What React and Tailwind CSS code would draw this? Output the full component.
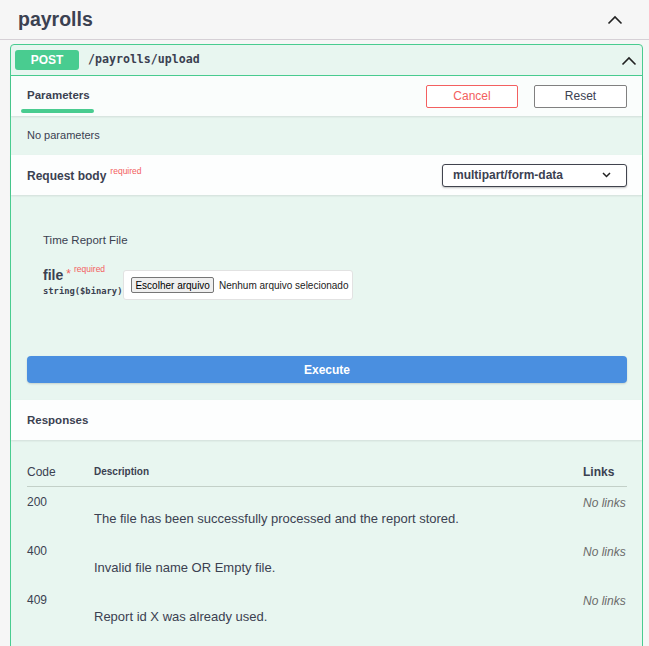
import React from "react";

const sans = { fontFamily: '"Liberation Sans", Arial, sans-serif' };
const mono = { fontFamily: '"DejaVu Sans Mono", monospace' };

function ChevronUp({ className }) {
  return (
    <svg className={className} width="16" height="10" viewBox="0 0 16 10" fill="none">
      <path d="M1.5 8.5 L8 2 L14.5 8.5" stroke="#222" strokeWidth="1.6" />
    </svg>
  );
}

function Row({ code, desc }) {
  return (
    <div className="flex h-[49px]">
      <div className="w-[67px] pt-[6px] text-[12px] text-[#3b4151]">{code}</div>
      <div className="flex-1 pt-[22px] text-[13px] text-[#3b4151]">{desc}</div>
      <div className="w-[44px] whitespace-nowrap pt-[7px] text-[12px] italic text-[#6b6b6b]">No links</div>
    </div>
  );
}

export default function App() {
  return (
    <div className="min-h-[646px] w-[649px] bg-[#f6f6f6] overflow-hidden" style={sans}>
      <div className="flex h-[40px] items-center justify-between border-b border-[#d6d0d6] pl-[18px] pr-[26px]">
        <span className="text-[19.5px] font-bold text-[#3b4151]">payrolls</span>
        <ChevronUp />
      </div>
      <div className="ml-[10px] mt-[4px] w-[633px] rounded-t-[4px] border border-[#49cc90] bg-[#e8f6f0]">
        <div className="flex h-[31px] items-center border-b border-[#49cc90] pl-[4px] pr-[5px]">
          <div className="flex h-[20px] w-[64px] items-center justify-center rounded-[3px] bg-[#49cc90] text-[12px] font-bold text-white">
            POST
          </div>
          <div className="ml-[9px] flex-1 text-[11.6px] font-semibold text-[#3b4151]" style={mono}>
            /payrolls/upload
          </div>
          <ChevronUp className="mt-[2px]" />
        </div>
        <div className="flex h-[40px] items-center justify-between bg-white/80 pl-[10px] pr-[15px] shadow-[0_1px_2px_rgba(0,0,0,0.1)]">
          <div className="flex h-[40px] w-[73px] flex-col justify-end">
            <div className="pb-[5px] pl-[6px] text-[11.5px] font-semibold text-[#3b4151]">Parameters</div>
            <div className="mb-[3px] h-[4px] rounded-[2px] bg-[#49cc90]" />
          </div>
          <div className="flex gap-[16px]">
            <div className="flex h-[23px] w-[92px] items-center justify-center rounded-[2px] border border-[#f36060] bg-white text-[12px] text-[#f36060]">
              Cancel
            </div>
            <div className="flex h-[23px] w-[93px] items-center justify-center rounded-[2px] border border-[#808080] bg-white text-[12px] font-medium text-[#3b4151]">
              Reset
            </div>
          </div>
        </div>
        <div className="flex h-[39px] items-center pl-[16px] text-[11px] text-[#3b4151]">No parameters</div>
        <div className="flex h-[40px] items-center justify-between bg-white/90 pl-[16px] pr-[15px] shadow-[0_1px_2px_rgba(0,0,0,0.1)]">
          <div className="flex items-start text-[12px] font-semibold text-[#3b4151]">
            <span className="mt-[1px]">Request body</span>
            <span className="ml-[4px] -mt-[1px] text-[8.5px] font-normal text-[#f36060]">required</span>
          </div>
          <div className="flex h-[23px] w-[185px] items-center justify-between rounded-[3px] border border-[#41444e] bg-white pl-[10px] pr-[15px] shadow-[0_1px_2px_rgba(0,0,0,0.25)]">
            <span className="text-[12px] font-bold text-[#3b4151]">multipart/form-data</span>
            <svg width="9" height="6" viewBox="0 0 9 6" fill="none">
              <path d="M1 1 L4.5 4.5 L8 1" stroke="#222" strokeWidth="1.5" />
            </svg>
          </div>
        </div>
        <div className="pl-[16px] pr-[15px] pt-[37px]">
          <div className="pl-[16px] text-[11.5px] text-[#3b4151]">Time Report File</div>
          <div className="mt-[16px] flex items-start pl-[16px]">
            <div>
              <div className="flex items-start">
                <span className="text-[14px] font-semibold text-[#3b4151]">file</span>
                <span className="ml-[3px] text-[12px] text-[#f36060]">*</span>
                <span className="ml-[3px] mt-[-2px] text-[8.5px] text-[#f36060]">required</span>
              </div>
              <div className="-mt-[1px] text-[8.8px] font-semibold text-[#3b4151]" style={mono}>
                string($binary)
              </div>
            </div>
            <div className="ml-[1px] mt-[5px] flex h-[30px] w-[230px] items-center whitespace-nowrap rounded-[3px] border border-[#e2e2e2] bg-white pl-[7px]">
              <div className="flex h-[16px] items-center rounded-[2px] border border-[#767676] bg-[#efefef] px-[3px] text-[10px] text-black">
                Escolher arquivo
              </div>
              <span className="ml-[5px] text-[10px] text-[#222]">Nenhum arquivo selecionado</span>
            </div>
          </div>
          <div className="mt-[56px] flex h-[27px] items-center justify-center rounded-[4px] bg-[#4a8fe0] text-[12px] font-bold text-white shadow-[0_1px_2px_rgba(0,0,0,0.15)]">
            Execute
          </div>
        </div>
        <div className="mt-[17px] flex h-[40px] items-center bg-white/90 pl-[16px] text-[11.5px] font-semibold text-[#3b4151] shadow-[0_1px_2px_rgba(0,0,0,0.1)]">
          Responses
        </div>
        <div className="pl-[16px] pr-[15px] pt-[23px] pb-[30px]">
          <div className="flex h-[24px] items-start border-b border-[#c3d0c8] text-[#3b4151]">
            <div className="w-[67px] text-[12px]">Code</div>
            <div className="flex-1 pt-[1px] text-[10px] font-semibold">Description</div>
            <div className="w-[44px] text-[12px] font-semibold">Links</div>
          </div>
          <div>
            <Row code="200" desc="The file has been successfully processed and the report stored." />
            <Row code="400" desc="Invalid file name OR Empty file." />
            <Row code="409" desc="Report id X was already used." />
          </div>
        </div>
      </div>
    </div>
  );
}
